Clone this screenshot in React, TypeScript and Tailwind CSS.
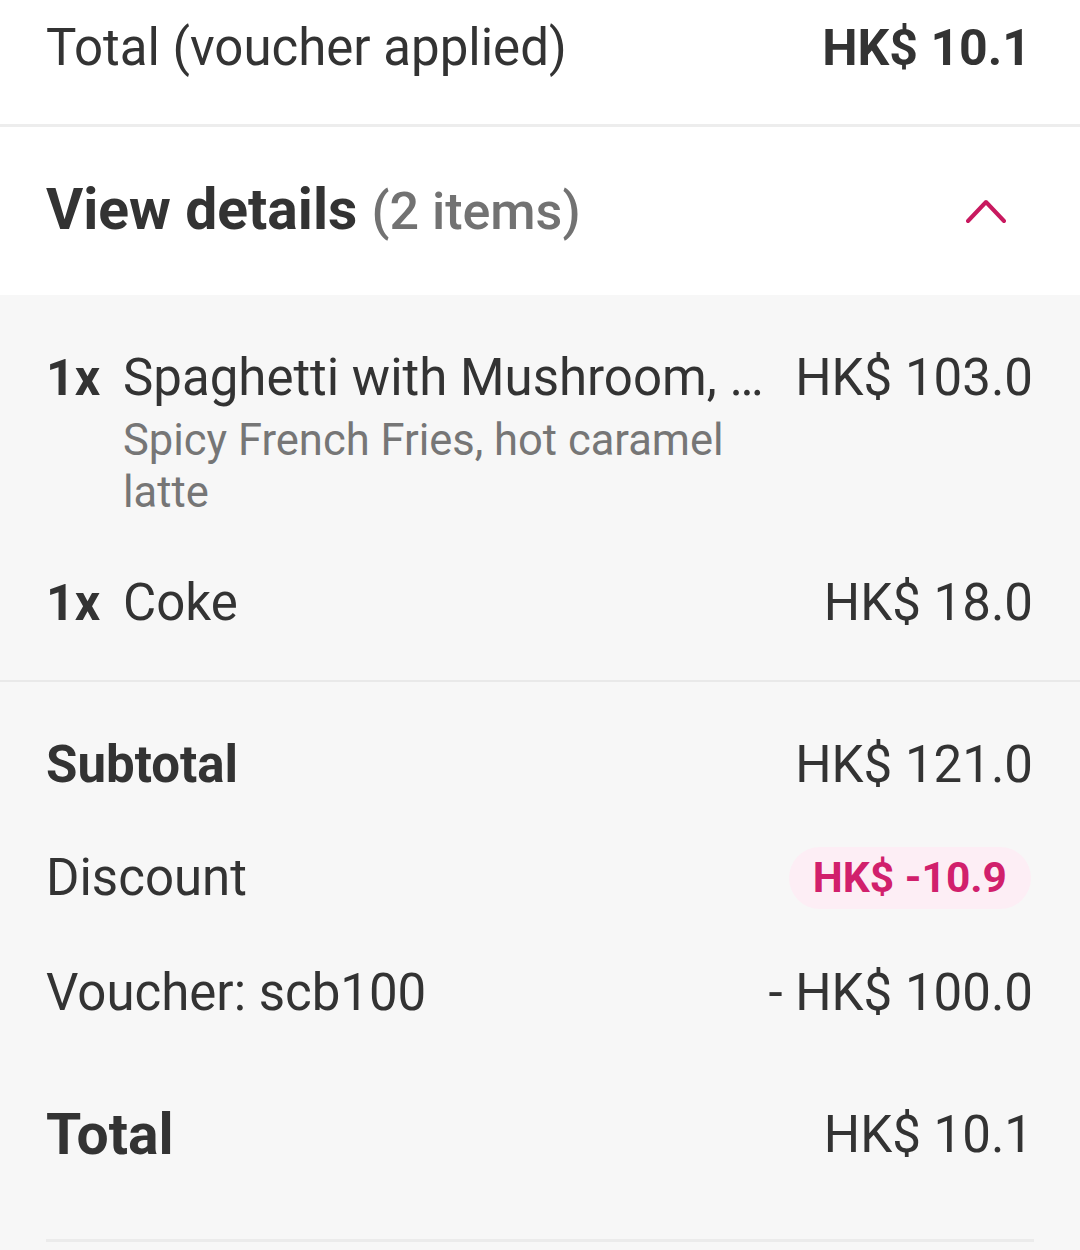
import React from "react";

type Row = {
  label: string;
  value: string;
  bold?: boolean;
};

function ChevronUp() {
  return (
    <svg width="40" height="26" viewBox="0 0 40 26" fill="none" aria-hidden="true">
      <polyline
        points="2,23 20,4 38,23"
        stroke="#c8195f"
        strokeWidth="4"
        strokeLinecap="round"
        strokeLinejoin="round"
      />
    </svg>
  );
}

function LineItem({
  qty,
  name,
  price,
  extras,
}: {
  qty: string;
  name: string;
  price: string;
  extras?: string;
}) {
  return (
    <div className="flex items-start">
      <span className="w-[77px] shrink-0 font-bold text-[50px] leading-[60px] text-[#333333]">
        {qty}
      </span>
      <div className="flex-1 min-w-0">
        <div className="flex items-start justify-between gap-6">
          <span className="whitespace-nowrap text-[51px] leading-[60px] text-[#333333]">
            {name}
          </span>
          <span className="shrink-0 text-[51px] leading-[60px] text-[#333333]">
            {price}
          </span>
        </div>
        {extras && (
          <p className="mt-[7px] w-[620px] text-[43.5px] leading-[52px] text-[#767676]">
            {extras}
          </p>
        )}
      </div>
    </div>
  );
}

export default function App() {
  const summary: Row[] = [
    { label: "Subtotal", value: "HK$ 121.0", bold: true },
  ];

  return (
    <div
      className="w-[1080px] h-[1250px] overflow-hidden bg-[#f7f7f7] text-[#333333]"
      style={{ fontFamily: "Roboto, 'Noto Sans', sans-serif" }}
    >
      {/* summary bar */}
      <div className="h-[124px] bg-white pl-[46px] pr-[49px] pt-[18px]">
        <div className="flex items-center justify-between">
          <span className="text-[51px] leading-[60px]">Total (voucher applied)</span>
          <span className="font-bold text-[50px] leading-[60px]">HK$ 10.1</span>
        </div>
      </div>
      <div className="h-[3px] bg-[#ededed]" />

      {/* collapsible header */}
      <div className="flex h-[168px] items-center justify-between bg-white pl-[46px] pr-[74px]">
        <h2 className="font-bold text-[57px] leading-[68px] text-[#333333]">
          View details{" "}
          <span className="font-medium text-[52px] text-[#727272]">(2 items)</span>
        </h2>
        <ChevronUp />
      </div>

      {/* items */}
      <div className="pl-[46px] pr-[47px] pt-[53px] pb-[47px] flex flex-col gap-[54px]">
        <LineItem
          qty="1x"
          name="Spaghetti with Mushroom, …"
          price="HK$ 103.0"
          extras="Spicy French Fries, hot caramel latte"
        />
        <LineItem qty="1x" name="Coke" price="HK$ 18.0" />
      </div>
      <div className="h-[2px] bg-[#e9e9e9]" />

      {/* totals */}
      <div className="pl-[46px] pr-[47px] pt-[53px]">
        {summary.map((row) => (
          <div key={row.label} className="flex items-center justify-between">
            <span className="font-bold text-[51px] leading-[60px]">{row.label}</span>
            <span className="text-[51px] leading-[60px]">{row.value}</span>
          </div>
        ))}

        <div className="mt-[53px] flex items-center justify-between">
          <span className="text-[51px] leading-[60px]">Discount</span>
          <span className="-my-[1px] mr-[2px] rounded-full bg-[#fdeef5] px-[24px] py-[1px] font-bold text-[42.5px] leading-[60px] text-[#d1206c]">
            HK$ -10.9
          </span>
        </div>

        <div className="mt-[55px] flex items-center justify-between">
          <span className="text-[51px] leading-[60px]">Voucher: scb100</span>
          <span className="text-[51px] leading-[60px]">- HK$ 100.0</span>
        </div>

        <div className="mt-[78px] flex items-center justify-between">
          <span className="font-bold text-[57px] leading-[68px]">Total</span>
          <span className="text-[51px] leading-[60px]">HK$ 10.1</span>
        </div>
      </div>

      <div className="mx-[46px] mt-[70px] h-[3px] bg-[#ebebeb]" />
    </div>
  );
}
